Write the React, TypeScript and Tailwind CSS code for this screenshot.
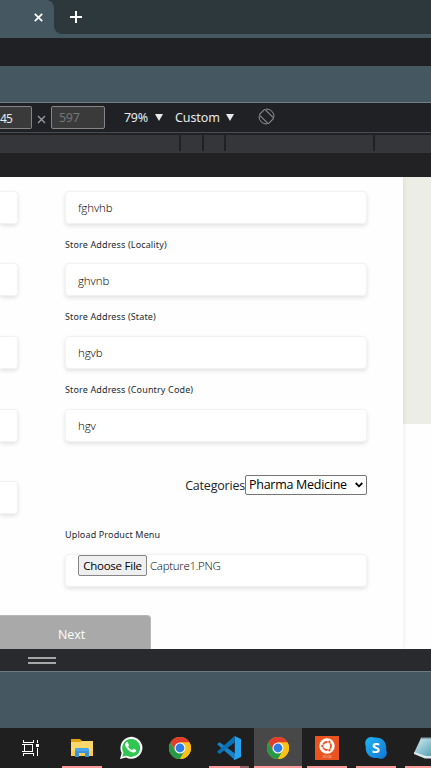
import React from 'react';

const openSans = "font-['Open_Sans','Noto_Sans',sans-serif]";
const notoSans = "font-['Noto_Sans','Open_Sans',sans-serif]";

function Box({ value, className = '' }: { value?: string; className?: string }) {
  return (
    <div
      className={`flex h-[33px] shrink-0 items-center border border-[#f2f2f2] bg-white shadow-[0_2px_4px_rgba(0,0,0,0.11)] ${className}`}
    >
      {value && (
        <span className={`ml-[12px] mt-[1px] whitespace-nowrap text-[11.5px] font-light tracking-[-0.1px] text-black ${openSans}`}>
          {value}
        </span>
      )}
    </div>
  );
}

function Label({ text, className = '' }: { text: string; className?: string }) {
  return (
    <div className={`flex h-[39.6px] items-center whitespace-nowrap text-[9px] leading-none tracking-[0.14px] text-[#24292e] ${notoSans} ${className}`}>
      <span className="mt-[1px]">{text}</span>
    </div>
  );
}

function Chrome() {
  return (
    <svg width="24" height="24" viewBox="0 0 24 24">
      <circle cx="12" cy="12" r="11" fill="#fbc116" />
      <path d="M2.47 6.5A11 11 0 0 1 21.53 6.5H12L7.24 14.75Z" fill="#e33b2e" />
      <path d="M2.47 6.5A11 11 0 0 0 12 23L16.76 14.75H12L7.24 14.75Z" fill="#279847" />
      <path d="M12 6.5H21.53A11 11 0 0 1 12 23L16.76 14.75Z" fill="#fbc116" />
      <circle cx="12" cy="12" r="5.5" fill="#fff" />
      <circle cx="12" cy="12" r="4.4" fill="#2f7de9" />
    </svg>
  );
}

function TaskView() {
  return (
    <svg className="-translate-x-px" width="17" height="16" viewBox="0 0 17 16" fill="none" stroke="#fff" shapeRendering="crispEdges">
      <path d="M1.5 0v2.5h10V0M1.5 16v-2.5h10V16M2.5 4.5h8v7h-8zM0 4.500h2M0 11.500h2M15.500 0v3M15.500 8v8" />
      <path d="M14 4h3v3h-3z" fill="#fff" stroke="none" />
    </svg>
  );
}

function Explorer() {
  return (
    <svg width="22" height="20" viewBox="0 0 22 20">
      <path d="M0 1h9l2 2h11v8H0z" fill="#e2a10f" />
      <path d="M0 4h9l2-1h11v15H0z" fill="#ffd86b" />
      <path d="M0 13h22v5H0z" fill="#fccb50" />
      <path d="M4 19v-7q0-2 2-2h10q2 0 2 2v7h-4v-4H8v4z" fill="#3b94db" />
      <path d="M4 13q0-3 2-3h10q2 0 2 3z" fill="#45a8ed" />
    </svg>
  );
}

function WhatsApp() {
  return (
    <svg width="24" height="24" viewBox="0 0 24 24">
      <path d="M1 23l1.700-6A11 11 0 1 1 7 21.400z" fill="#fff" />
      <path d="M3.300 20.800l1.100-4.300A9 9 0 1 1 7.600 19.700z" fill="#2fc651" />
      <path
        d="M8.900 6.500c-.3-.6-1.400-.6-1.900.1-1.700 2-.3 4.700 1.500 6.600 2 2.200 4.600 3.700 6.700 3.200 1.500-.4 2.200-1.400 1.900-2.400l-2.500-1.300c-.5-.2-1 .9-1.500 1.300-1.700-.5-3.400-1.900-4-3.500.4-.5 1-1 .8-1.500z"
        fill="#fff"
      />
    </svg>
  );
}

function VsCode() {
  return (
    <svg width="24" height="24" viewBox="0 0 24 24">
      <path d="M0 8.200l2.500-2L18 17.500V24z" fill="#1683c9" />
      <path d="M0 15.800L17.500 0v6.500L2.500 18z" fill="#0872b6" />
      <path d="M17.500 0L24 3v18l-6.500 3-1-1.200 1.300-.8V2.500z" fill="#27a2ee" />
    </svg>
  );
}

function Ubuntu() {
  return (
    <svg width="24" height="24" viewBox="0 0 24 24">
      <path d="M0 0h24v24H0z" fill="#e95420" />
      <circle cx="12" cy="10" r="7.700" fill="#fff" />
      <circle cx="12" cy="10" r="4" fill="none" stroke="#e95420" strokeWidth="1.800" />
      <path d="M12 10L6 10M12 10L15 4.800M12 10L15 15.200" stroke="#fff" strokeWidth="1" />
      <g fill="#e95420" stroke="#fff" strokeWidth=".7">
        <circle cx="7.300" cy="10" r="1.600" />
        <circle cx="14.400" cy="5.900" r="1.600" />
        <circle cx="14.400" cy="14.100" r="1.600" />
      </g>
      <circle cx="12" cy="10" r="2.600" fill="#fff" />
      <text x="12" y="22.300" textAnchor="middle" fontSize="3.600" fill="#fbd5c5" fontFamily="Open Sans">20.04</text>
    </svg>
  );
}

function Skype() {
  return (
    <svg width="22" height="22" viewBox="0 0 22 22">
      <defs>
        <linearGradient id="skype" x1="0" y1="0" x2="1" y2="1">
          <stop offset="0" stopColor="#20b5f3" />
          <stop offset="1" stopColor="#1275d3" />
        </linearGradient>
      </defs>
      <path d="M6 0c2 0 2.500.7 4 .6C18 .3 22 6 21.200 13c2 4-1 9-5.700 8.800-2 0-2.500-.8-4.500-.7C4.500 21 0 16 .8 9.500-1 5 1.500 0 6 0z" fill="url(#skype)" />
      <text x="11" y="16.200" textAnchor="middle" fontSize="15" fontWeight="700" fill="#fff" fontFamily="Open Sans">S</text>
    </svg>
  );
}

function Notepad() {
  return (
    <svg width="24" height="24" viewBox="0 0 24 24">
      <defs>
        <linearGradient id="note" x1="0" y1="0" x2="1" y2="1">
          <stop offset="0" stopColor="#d8f0f4" />
          <stop offset="1" stopColor="#3f93a8" />
        </linearGradient>
      </defs>
      <path d="M8 2h16v19H13L1 17z" fill="url(#note)" />
      <path d="M1 16l12 4h11v2.500H12L1 18z" fill="#dceaec" />
      <path d="M8 1.500h16V3H7.500z" fill="#8aa4ac" />
    </svg>
  );
}

function Task({ children, bar = 'none', active = false }: { children: React.ReactNode; bar?: 'none' | 'one' | 'many' | 'full'; active?: boolean }) {
  return (
    <div className={`mr-px flex h-[40px] w-[48px] shrink-0 flex-col items-center ${active ? 'bg-[#484848]' : ''}`}>
      <div className="flex h-[38px] items-center justify-center pt-[2px]">{children}</div>
      {bar === 'one' && <div className="h-[2px] w-[40px] bg-[#fc9a9c]" />}
      {bar === 'full' && <div className="h-[2px] w-[48px] bg-[#fc9a9c]" />}
      {bar === 'many' && (
        <div className="flex h-[2px] w-[40px]">
          <div className="w-[31px] bg-[#fc9a9c]" />
          <div className="w-[9px] bg-[#9a6264]" />
        </div>
      )}
    </div>
  );
}

const fields = [
  { label: 'Store Address (Locality)', value: 'ghvnb' },
  { label: 'Store Address (State)', value: 'hgvb' },
  { label: 'Store Address (Country Code)', value: 'hgv' },
];

export default function App() {
  return (
    <div className={`flex h-[768px] w-[431px] flex-col overflow-hidden bg-[#202124] ${openSans}`}>
      {/* Tab strip */}
      <div className="flex h-[34px] shrink-0 bg-[#455760]">
        <div className="flex w-[54px] bg-[#2d383d]">
          <div className="flex w-[54px] items-center justify-end rounded-tr-[8px] bg-[#455760] pr-[11px]">
            <svg width="9" height="9" viewBox="0 0 9 9" stroke="#fff" strokeWidth="1.700">
              <path d="M.8.8l7.400 7.400M8.200.8L.8 8.200" />
            </svg>
          </div>
        </div>
        <div className="flex flex-1 items-center rounded-bl-[8px] bg-[#2d383d] pl-[16px]">
          <svg width="12" height="12" viewBox="0 0 12 12" stroke="#fff" strokeWidth="2">
            <path d="M6 0v12M0 6h12" />
          </svg>
        </div>
      </div>
      <div className="h-[4px] shrink-0 bg-[#455760]" />
      <div className="h-[28px] shrink-0 bg-[#202124]" />
      <div className="h-[37px] shrink-0 border-b border-[#6f7f86] bg-[#455760]" />

      {/* Device toolbar */}
      <div className={`flex h-[30px] shrink-0 items-center border-b border-[#494c57] bg-[#202124] text-[12.5px] text-[#e8eaed] ${notoSans}`}>
        <div className="flex h-[23px] w-[32px] items-center rounded-r-[2px] border border-l-0 border-[#858585] bg-[#3a3a3a]">
          <span className="mt-[2px] text-[12px] tracking-[-0.8px]">45</span>
        </div>
        <svg className="ml-[5px] mt-[3px]" width="9" height="9" viewBox="0 0 9 9" stroke="#9aa0a6" strokeWidth="1.200">
          <path d="M1 1l7 7M8 1L1 8" />
        </svg>
        <div className="ml-[5px] flex h-[23px] w-[54px] items-center rounded-[2px] border border-[#858585] bg-[#3a3a3a] pl-[7px] text-[#757575]">
          <span className="mt-[2px] tracking-[-0.3px]">597</span>
        </div>
        <span className="ml-[19px] mt-[2px] w-[25px] whitespace-nowrap tracking-[-0.3px]">79%</span>
        <svg className="ml-[6px]" width="8" height="7" viewBox="0 0 8 7"><path d="M0 0h8L4 7z" fill="#e8eaed" /></svg>
        <span className="ml-[12px] mt-[2px] w-[45px] whitespace-nowrap tracking-[-0.1px]">Custom</span>
        <svg className="ml-[6px]" width="8" height="7" viewBox="0 0 8 7"><path d="M0 0h8L4 7z" fill="#e8eaed" /></svg>
        <svg className="-mt-[2px] ml-[24px]" width="17" height="17" viewBox="0 0 17 17" fill="none" stroke="#8e9195">
          <rect x="4.500" y="2" width="8" height="13" rx="1" transform="rotate(-45 8.500 8.500)" />
          <path d="M8 1a7.500 7.500 0 0 1 8 8M9 16a7.500 7.500 0 0 1-8-8" />
        </svg>
      </div>
      {/* Breakpoint ruler */}
      <div className="flex h-[20px] shrink-0 border-t-2 border-[#202124] bg-[#35363a]">
        <div className="ml-[179px] h-[16px] w-[2px] bg-[#202124]" />
        <div className="ml-[21px] h-[16px] w-[2px] bg-[#202124]" />
        <div className="ml-[20px] h-[16px] w-[2px] bg-[#202124]" />
        <div className="ml-[147px] h-[16px] w-[2px] bg-[#202124]" />
      </div>
      <div className="h-[24px] shrink-0 bg-[#222224]" />

      {/* Web page */}
      <div className="flex h-[472px] shrink-0 overflow-hidden bg-[#fefefe]">
        <div className="z-10 flex h-[472px] w-[403px] shrink-0 flex-col bg-[#fefefe] shadow-[0_0_5px_rgba(0,0,0,0.1)]">
          <div className="flex pt-[13.8px]">
            <div className="flex w-[18px] flex-col gap-[39.6px]">
              {[0, 1, 2, 3, 4].map((i) => (
                <Box key={i} className="rounded-r-[4px] border-l-0" />
              ))}
            </div>
            <div className="ml-[47px] flex w-[302px] flex-col">
              <Box value="fghvhb" className="rounded-[4px]" />
              {fields.map((f) => (
                <div key={f.label}>
                  <Label text={f.label} />
                  <Box value={f.value} className="rounded-[4px]" />
                </div>
              ))}
              <div className="mt-[33.4px] flex h-[20px] items-center justify-end">
                <span className="mt-[2px] whitespace-nowrap text-[12.5px] tracking-[-0.2px] text-[#212529]">Categories</span>
                <div className="flex h-[20px] w-[122px] items-center justify-between rounded-[2px] border border-[#767676] bg-white pl-[3px] pr-[3px] text-[12.5px] text-black">
                  <span className="mt-[1px] whitespace-nowrap tracking-[-0.27px]">Pharma Medicine</span>
                  <svg width="8" height="6" viewBox="0 0 8 6" fill="none" stroke="#000" strokeWidth="1.800"><path d="M.7 1L4 4.300 7.300 1" /></svg>
                </div>
              </div>
              <Label text="Upload Product Menu" className="mt-[19.2px]" />
              <div className="flex h-[33px] items-start rounded-[4px] border border-[#f2f2f2] bg-white pl-[12px] shadow-[0_2px_4px_rgba(0,0,0,0.11)]">
                <div className="flex h-[21px] w-[69px] items-center justify-center rounded-[2px] border border-[#858585] bg-[#efefef] text-[11.5px] tracking-[-0.25px] text-black">
                  <span className="mt-[1px] whitespace-nowrap">Choose File</span>
                </div>
                <span className="ml-[3px] mt-[2px] whitespace-nowrap text-[11.5px] font-light tracking-[-0.3px] text-black">Capture1.PNG</span>
              </div>
            </div>
          </div>
          <div className="mt-[28.2px] flex h-[38px] w-[151px] shrink-0 items-center rounded-tr-[4px] border border-l-0 border-[#b9b9b9] bg-[#a9a9a9] pl-[58px] text-[12.5px] text-white">
            <span className="mt-[2px] tracking-[-0.1px]">Next</span>
          </div>
        </div>
        <div className="h-[247px] flex-1 bg-[#ecede4]" />
      </div>

      {/* Resize handle */}
      <div className="flex h-[23px] shrink-0 border-b border-[#6b7b82] bg-[#292a2d] pl-[28px] pt-[8px]">
        <div className="flex w-[28px] flex-col gap-[3px]">
          <div className="h-[2px] bg-[#a6a8a8]" />
          <div className="h-[2px] bg-[#a6a8a8]" />
        </div>
      </div>
      <div className="h-[56px] shrink-0 bg-[#455760]" />

      {/* Taskbar */}
      <div className="flex h-[40px] shrink-0 overflow-hidden bg-[#1f1f1f] pl-[7px]">
        <Task><TaskView /></Task>
        <div className="w-[2px] shrink-0" />
        <Task bar="one"><Explorer /></Task>
        <Task><WhatsApp /></Task>
        <Task><Chrome /></Task>
        <Task bar="many"><VsCode /></Task>
        <Task bar="full" active><Chrome /></Task>
        <Task bar="one"><Ubuntu /></Task>
        <Task bar="one"><Skype /></Task>
        <Task bar="one"><Notepad /></Task>
      </div>
    </div>
  );
}
